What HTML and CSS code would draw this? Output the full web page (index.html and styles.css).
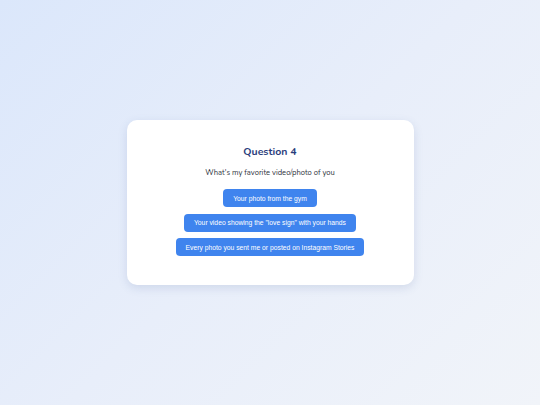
FILE: index.html
```html
<!DOCTYPE html>
<html lang="en">
<head>
    <meta charset="UTF-8">
    <meta name="viewport" content="width=device-width, initial-scale=1.0">
    <title>Question 4</title>
    <link rel="stylesheet" href="styles.css">
</head>
<body>
    <div class="quiz-container">
        <!-- Question Card -->
        <div class="question-card">
            <h2>Question 4</h2>
            <p class="question-text">What's my favorite video/photo of you</p>
            <div class="answers">
                <button class="answer-btn">Your photo from the gym</button>
                <button class="answer-btn">Your video showing the "love sign" with your hands</button>
                <button class="answer-btn">Every photo you sent me or posted on Instagram Stories</button>
            </div>
        </div>
    </div>
</body>
</html>
```

FILE: styles.css
```css
:root {
    --primary-color: #3f84ee;
    --title-color: #2a3d7c;
    --text-dark: #2f3440;
}

body {
    margin: 0;
    min-height: 100vh;
    background: linear-gradient(135deg, #dbe7fb 0%, #e8eefa 50%, #f1f4f9 100%);
    font-family: 'Nunito', 'Noto Sans', sans-serif;
}

.quiz-container {
    min-height: 100vh;
    display: flex;
    align-items: center;
    justify-content: center;
}

.question-card {
    width: 287px;
    box-sizing: border-box;
    padding: 25px 20px 29px;
    background: #ffffff;
    border-radius: 10px;
    box-shadow: 0 3px 10px rgba(60, 90, 150, 0.15);
    text-align: center;
}

h2 {
    margin: 0 0 7.5px;
    color: var(--title-color);
    font-size: 10.5px;
    line-height: 14px;
    font-weight: 700;
}

.question-text {
    margin: 0 0 11.5px;
    color: var(--text-dark);
    font-size: 7.6px;
    line-height: 11px;
}

.answers {
    display: flex;
    flex-direction: column;
    align-items: center;
    gap: 6.5px;
}

.answer-btn {
    background: var(--primary-color);
    color: white;
    border: none;
    border-radius: 4px;
    padding: 0 10px;
    height: 18px;
    font-family: 'Liberation Sans', Arial, sans-serif;
    font-size: 6.75px;
    cursor: pointer;
}
```
